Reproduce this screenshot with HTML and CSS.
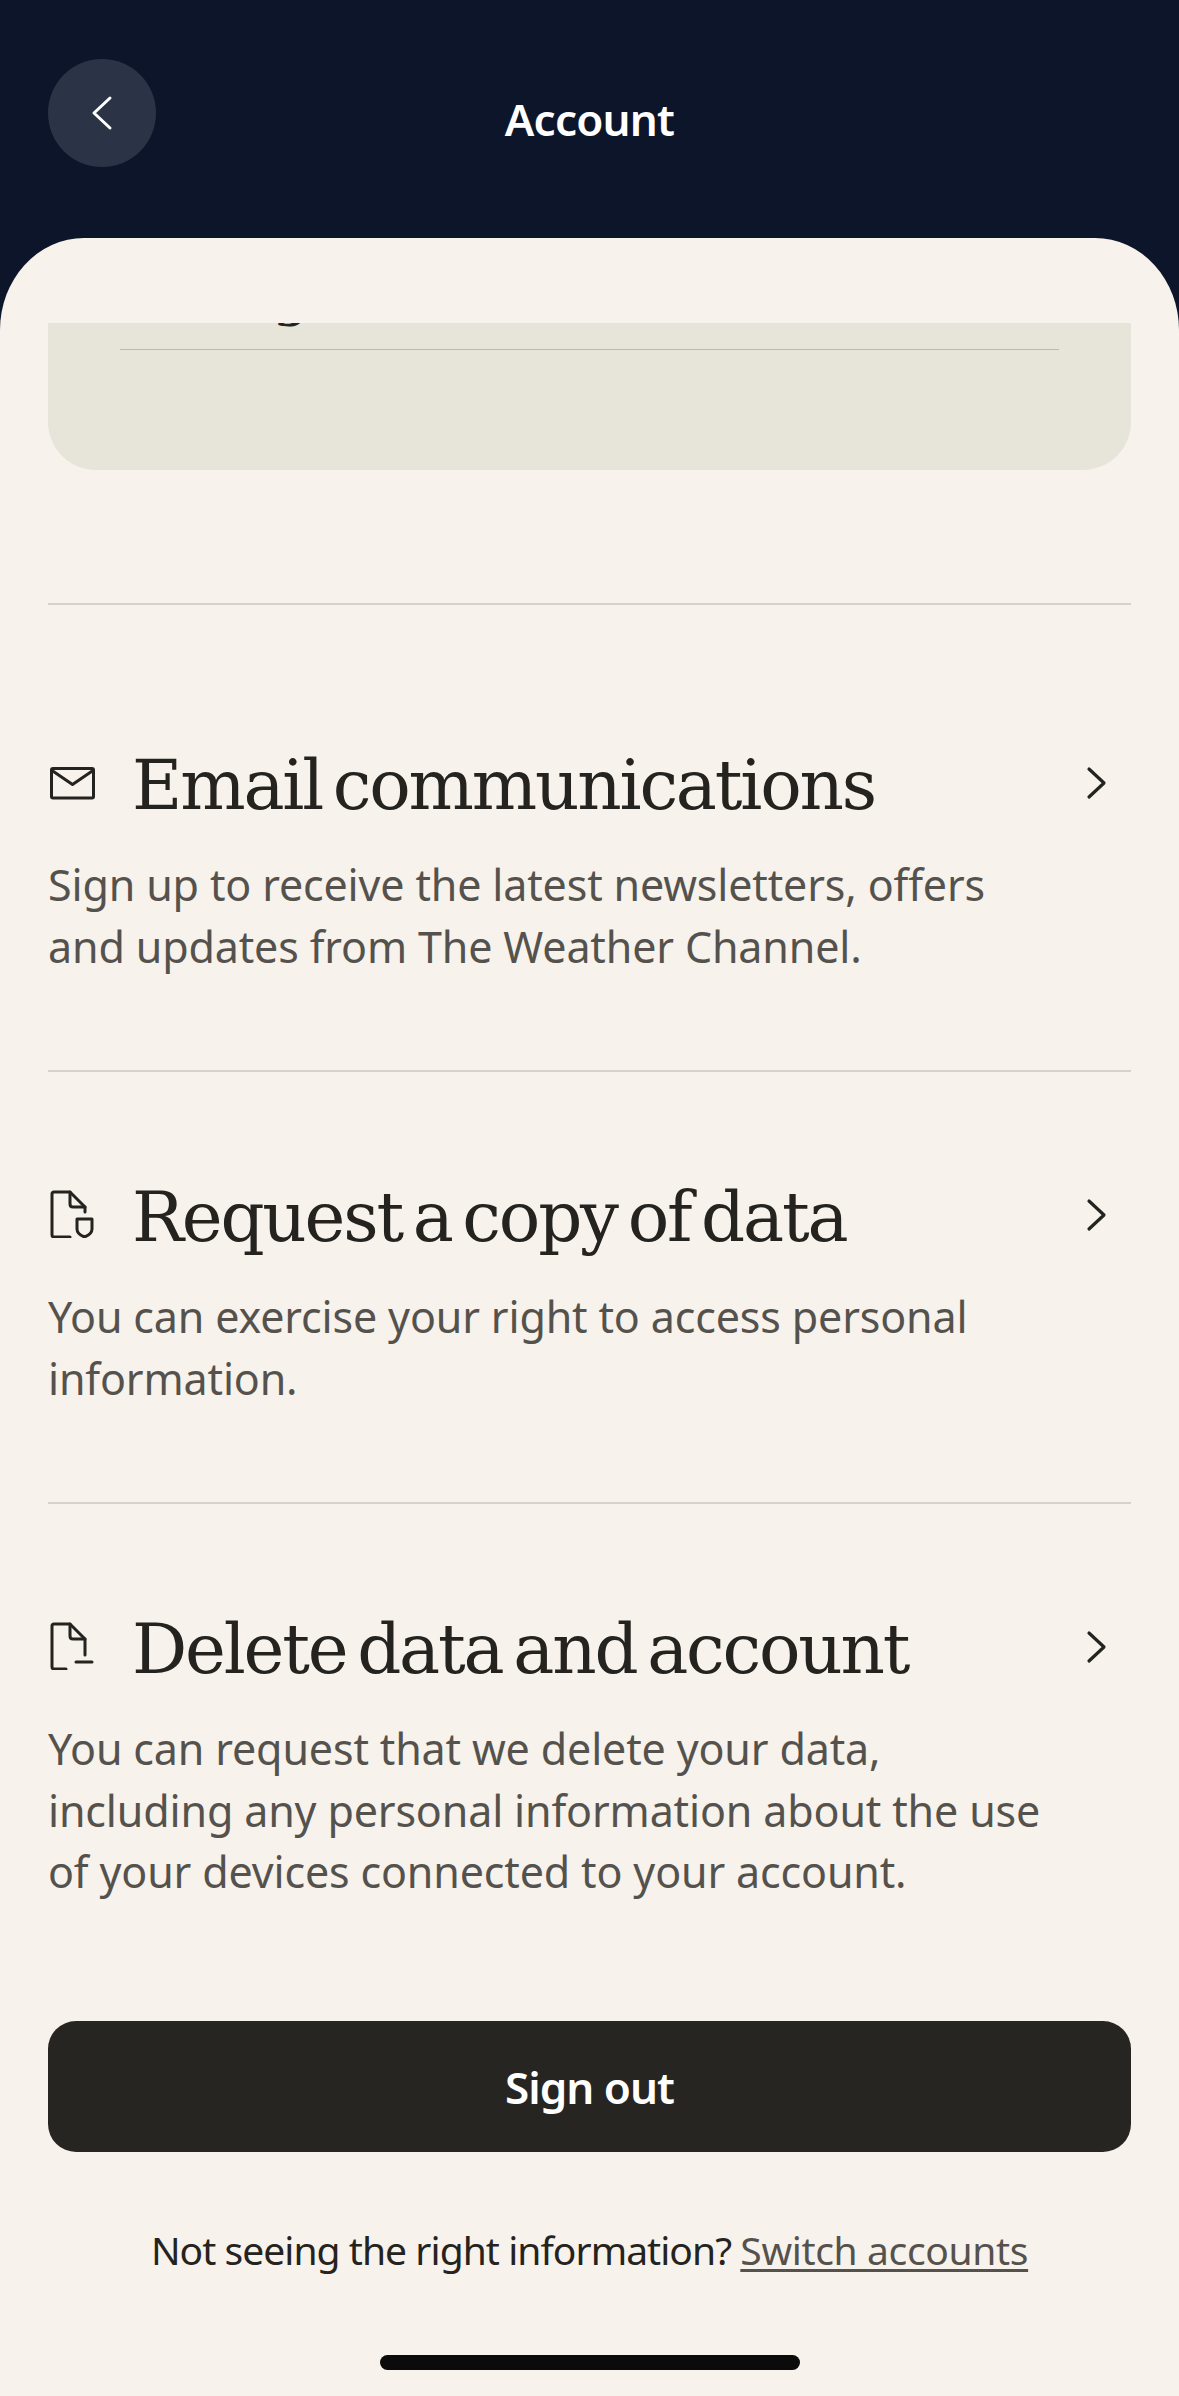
FILE: index.html
```html
<!DOCTYPE html>
<html lang="en">
<head>
    <meta charset="UTF-8">
    <meta name="viewport" content="width=device-width, initial-scale=1.0">
    <title>Account</title>
    <link rel="stylesheet" href="styles.css">
</head>
<body>
    <header class="top-bar">
        <button class="back-btn" aria-label="Back">
            <svg width="108" height="108" viewBox="0 0 108 108" fill="none" stroke="#ffffff" stroke-width="3" stroke-linecap="round" stroke-linejoin="round"><path d="M62 39 L46 54 L62 69"/></svg>
        </button>
        <h1>Account</h1>
    </header>

    <main class="sheet">
        <div class="scroller">
            <div class="card">
                <div class="card-clipped">g</div>
                <div class="card-line"></div>
            </div>

            <section class="item item-first">
                <div class="item-head">
                    <svg class="item-icon" width="48" height="48" viewBox="0 0 48 48" fill="none" stroke="#252320" stroke-width="3" stroke-linejoin="round" stroke-linecap="round"><rect x="3.5" y="10.5" width="42" height="29.5" rx="1.5"/><path d="M4 12.5 L24.5 26.5 L45 12.5"/></svg>
                    <h2>Email communications</h2>
                    <svg class="chevron" width="40" height="48" viewBox="0 0 40 48" fill="none" stroke="#252320" stroke-width="3.2" stroke-linecap="round" stroke-linejoin="round"><path d="M13 10 L28 24 L13 38"/></svg>
                </div>
                <p>Sign up to receive the latest newsletters, offers and updates from The Weather Channel.</p>
            </section>

            <section class="item">
                <div class="item-head">
                    <svg class="item-icon" width="48" height="48" viewBox="0 0 48 48" fill="none" stroke="#252320" stroke-width="3" stroke-linejoin="round" stroke-linecap="round"><path d="M22 47 H6 Q4 47 4 45 V4 Q4 2 6 2 H22 L37 17 V22"/><path d="M22 2 V14 Q22 17 25 17 H37"/><path d="M29 29 H44 V39 Q44 44 36.5 47 Q29 44 29 39 Z"/></svg>
                    <h2>Request a copy of data</h2>
                    <svg class="chevron" width="40" height="48" viewBox="0 0 40 48" fill="none" stroke="#252320" stroke-width="3.2" stroke-linecap="round" stroke-linejoin="round"><path d="M13 10 L28 24 L13 38"/></svg>
                </div>
                <p>You can exercise your right to access personal information.</p>
            </section>

            <section class="item item-last">
                <div class="item-head">
                    <svg class="item-icon" width="48" height="48" viewBox="0 0 48 48" fill="none" stroke="#252320" stroke-width="3" stroke-linejoin="round" stroke-linecap="round"><path d="M18 47 H6 Q4 47 4 45 V4 Q4 2 6 2 H22 L37 17 V33"/><path d="M22 2 V14 Q22 17 25 17 H37"/><path d="M28 40 H44"/></svg>
                    <h2>Delete data and account</h2>
                    <svg class="chevron" width="40" height="48" viewBox="0 0 40 48" fill="none" stroke="#252320" stroke-width="3.2" stroke-linecap="round" stroke-linejoin="round"><path d="M13 10 L28 24 L13 38"/></svg>
                </div>
                <p>You can request that we delete your data, including any personal information about the use of your devices connected to your account.</p>
            </section>
        </div>

        <button class="signout-btn">Sign out</button>
        <p class="switch-row">Not seeing the right information? <a href="#">Switch accounts</a></p>
        <div class="home-bar"></div>
    </main>
</body>
</html>
```

FILE: styles.css
```css
* {
    box-sizing: border-box;
}
body {
    font-family: 'Noto Sans', Roboto, sans-serif;
    background-color: #0d152b;
    margin: 0;
    width: 1179px;
    height: 2396px;
    overflow: hidden;
    display: flex;
    flex-direction: column;
}
.top-bar {
    height: 238px;
    flex: none;
    padding: 59px 48px 0;
    position: relative;
}
.top-bar h1 {
    position: absolute;
    left: 0;
    right: 0;
    top: 87px;
    margin: 0;
    text-align: center;
    color: #ffffff;
    font-size: 44px;
    line-height: 64px;
    font-weight: 600;
    letter-spacing: -0.8px;
}
.back-btn {
    display: block;
    width: 108px;
    height: 108px;
    padding: 0;
    border: none;
    border-radius: 50%;
    background-color: #2b3347;
}
.sheet {
    flex: 1;
    background-color: #f7f2eb;
    border-radius: 84px 84px 0 0 / 92px 92px 0 0;
    padding: 85px 48px 0;
    display: flex;
    flex-direction: column;
}
.scroller {
    overflow: hidden;
    height: 1698px;
    flex: none;
}
.card {
    background-color: #e7e4d9;
    height: 147px;
    border-radius: 0 0 48px 48px;
    padding: 0 72px;
    overflow: hidden;
}
/* only the tail of this row's text is still showing above the fold */
.card-clipped {
    height: 48px;
    margin-top: -48px;
    padding-left: 154px;
    font-family: 'DejaVu Serif', serif;
    font-size: 48px;
    line-height: 48px;
    font-weight: 700;
    color: #252320;
}
.card-line {
    margin-top: 26px;
    height: 1px;
    background-color: #bdb9ad;
}
.item {
    border-top: 2px solid #d6d3ca;
    padding-top: 109px;
    height: 432px;
}
.item-first {
    margin-top: 133px;
    padding-top: 144px;
    height: 467px;
}
.item-last {
    height: auto;
}
.item-head {
    display: flex;
    align-items: center;
    height: 72px;
}
.item-icon {
    flex: none;
    margin-bottom: 6px;
}
.item-head h2 {
    flex: 1;
    margin: 0 0 0 36px;
    font-family: 'DejaVu Serif', serif;
    font-weight: 400;
    font-size: 69px;
    line-height: 72px;
    letter-spacing: -2.2px;
    word-spacing: -9px;
    color: #252320;
}
.chevron {
    flex: none;
    margin: 0 15px 4px 0;
}
.item p {
    margin: 33px 0 0;
    max-width: 1000px;
    font-size: 43px;
    line-height: 61.5px;
    letter-spacing: -0.15px;
    color: #55524e;
}
.signout-btn {
    display: block;
    flex: none;
    width: 1083px;
    height: 131px;
    border: none;
    border-radius: 28px;
    background-color: #272522;
    color: #ffffff;
    font-family: inherit;
    font-size: 44px;
    font-weight: 600;
    letter-spacing: -1px;
}
.switch-row {
    margin: 70px 0 0;
    width: 1083px;
    text-align: center;
    font-size: 39px;
    line-height: 56px;
    letter-spacing: -0.95px;
    color: #252320;
}
.switch-row a {
    color: #55524e;
    letter-spacing: -0.35px;
    text-decoration-thickness: 3px;
    text-underline-offset: 4px;
}
.home-bar {
    width: 420px;
    height: 15px;
    margin: 77px 0 0 332px;
    border-radius: 8px;
    background-color: #0b0b0b;
}
```
